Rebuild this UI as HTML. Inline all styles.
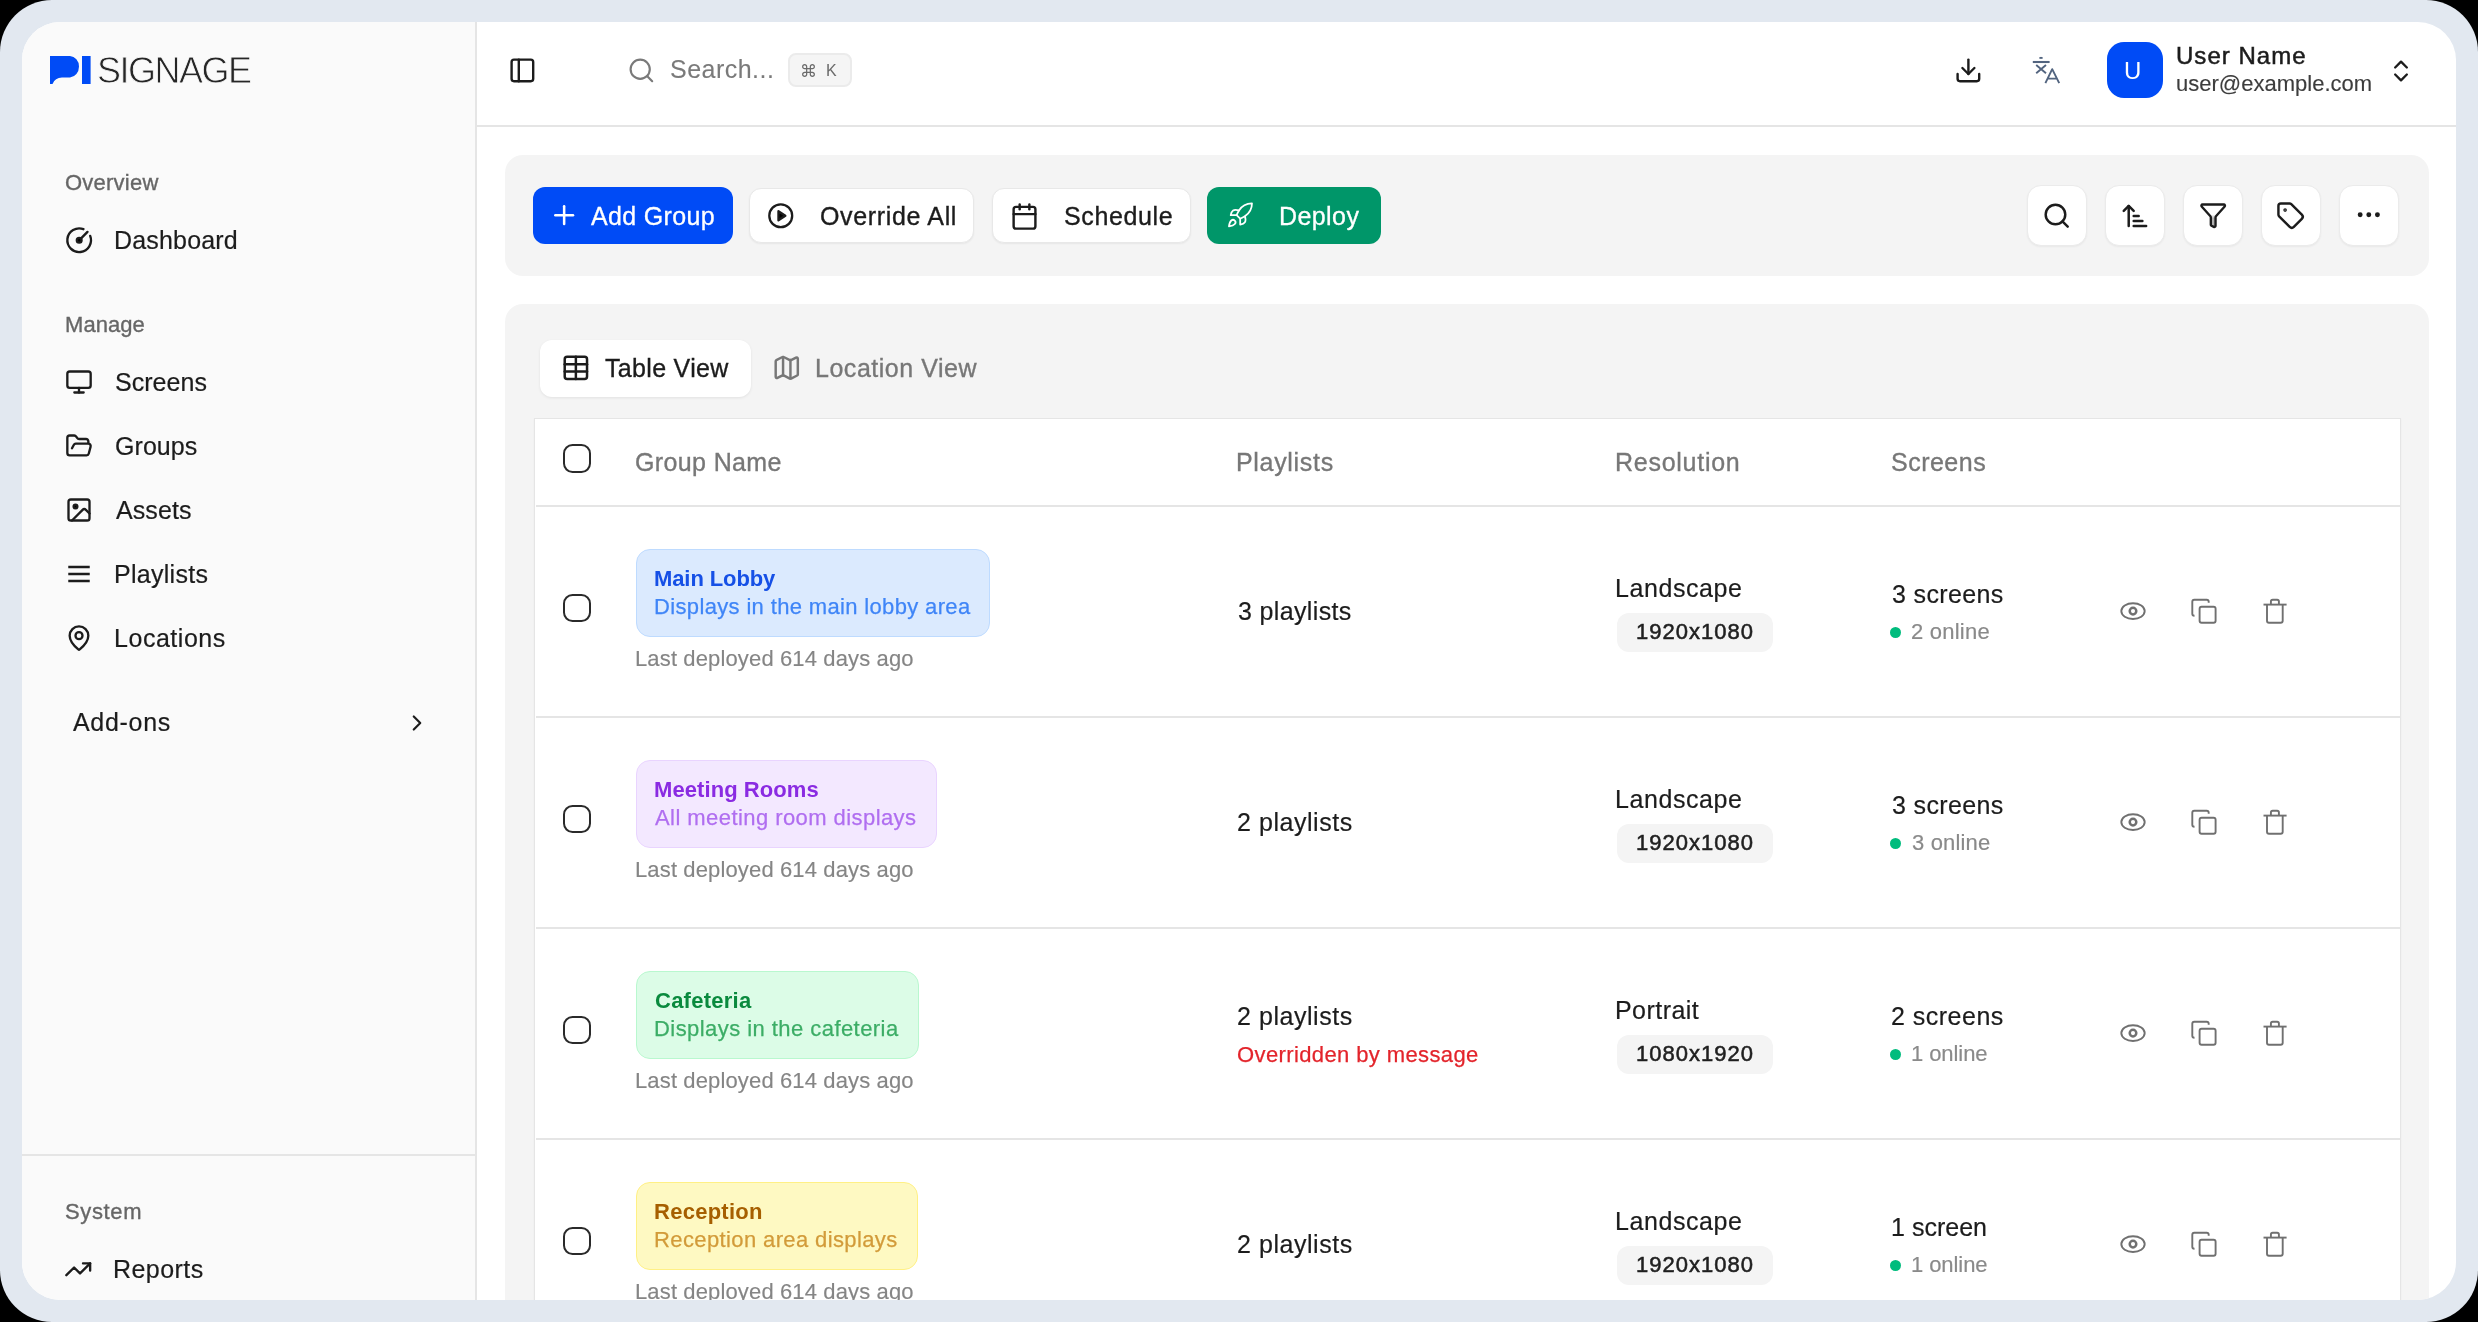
<!DOCTYPE html><html><head><meta charset="utf-8"><style>
html,body{margin:0;padding:0;width:2478px;height:1322px;overflow:hidden;background:#000}
.frame{position:absolute;left:0;top:0;width:2478px;height:1322px;background:#e2e8f0;border-radius:52px}
.clip{position:absolute;left:0;top:0;width:2478px;height:1322px;background:#fff;clip-path:inset(22px 22px 22px 22px round 38px)}
.t{position:absolute;white-space:pre;font-family:"Liberation Sans",sans-serif;will-change:transform}
.r{position:absolute}
.i{position:absolute;overflow:visible}
</style></head><body><div class="frame"></div>
<div class="clip">
<div class="r" style="left:22px;top:22px;width:453px;height:1278px;background:#fafafa"></div>
<div class="r" style="left:475px;top:22px;width:2px;height:1278px;background:#e5e5e5"></div>
<svg class="i" style="left:50px;top:56px;width:41px;height:28px" viewBox="0 0 41 28"><path d="M0 0H20A9.5 10.5 0 0 1 29 10.5 9.5 11 0 0 1 20 21.5H12Q5 21.5 2.5 28H0Z" fill="#004bf6"/><rect x="32" y="0" width="8.6" height="28" fill="#004bf6"/></svg>
<div class="t" style="left:96.90px;top:53.33px;font-size:36px;line-height:36px;color:#262626;font-weight:400;letter-spacing:-1.505px;-webkit-text-stroke:0.8px #fafafa">SIGNAGE</div>
<div class="t" style="left:65.08px;top:172.08px;font-size:22px;line-height:22px;color:#666666;font-weight:400;letter-spacing:0.236px;-webkit-text-stroke:0.35px #666666;">Overview</div>
<svg class="i" style="left:64.50px;top:226.20px;width:28.40px;height:28.40px;" viewBox="0 0 24 24" fill="none" stroke="#1c1c1c" stroke-width="2" stroke-linecap="round" stroke-linejoin="round"><path d="M15.6 2.7a10 10 0 1 0 5.7 5.7"/><circle cx="12" cy="12" r="2" fill="currentColor"/><path d="M13.4 10.6 19 5"/></svg>
<div class="t" style="left:114.00px;top:228.04px;font-size:25px;line-height:25px;color:#1c1c1c;font-weight:400;letter-spacing:0.175px;-webkit-text-stroke:0.2px #1c1c1c;">Dashboard</div>
<div class="t" style="left:65.08px;top:314.18px;font-size:22px;line-height:22px;color:#666666;font-weight:400;letter-spacing:0.056px;-webkit-text-stroke:0.35px #666666;">Manage</div>
<svg class="i" style="left:64.80px;top:368.00px;width:28.00px;height:28.00px;" viewBox="0 0 24 24" fill="none" stroke="#1c1c1c" stroke-width="2" stroke-linecap="round" stroke-linejoin="round"><rect width="20" height="14" x="2" y="3" rx="2"/><path d="M8 21h8"/><path d="M12 17v4"/></svg>
<div class="t" style="left:114.50px;top:369.84px;font-size:25px;line-height:25px;color:#1c1c1c;font-weight:400;letter-spacing:0.031px;-webkit-text-stroke:0.2px #1c1c1c;">Screens</div>
<svg class="i" style="left:64.80px;top:432.00px;width:28.00px;height:28.00px;" viewBox="0 0 24 24" fill="none" stroke="#1c1c1c" stroke-width="2" stroke-linecap="round" stroke-linejoin="round"><path d="m6 14 1.5-2.9A2 2 0 0 1 9.24 10H20a2 2 0 0 1 1.94 2.5l-1.54 6a2 2 0 0 1-1.95 1.5H4a2 2 0 0 1-2-2V5a2 2 0 0 1 2-2h3.9a2 2 0 0 1 1.69.9l.81 1.2a2 2 0 0 0 1.67.9H18a2 2 0 0 1 2 2v2"/></svg>
<div class="t" style="left:114.50px;top:433.84px;font-size:25px;line-height:25px;color:#1c1c1c;font-weight:400;letter-spacing:0.064px;-webkit-text-stroke:0.2px #1c1c1c;">Groups</div>
<svg class="i" style="left:64.80px;top:496.00px;width:28.00px;height:28.00px;" viewBox="0 0 24 24" fill="none" stroke="#1c1c1c" stroke-width="2" stroke-linecap="round" stroke-linejoin="round"><rect width="18" height="18" x="3" y="3" rx="2" ry="2"/><circle cx="9" cy="9" r="1.6" fill="currentColor"/><path d="m21 15-3.086-3.086a2 2 0 0 0-2.828 0L6 21"/></svg>
<div class="t" style="left:115.50px;top:497.84px;font-size:25px;line-height:25px;color:#1c1c1c;font-weight:400;letter-spacing:0.095px;-webkit-text-stroke:0.2px #1c1c1c;">Assets</div>
<svg class="i" style="left:64.80px;top:560.00px;width:28.00px;height:28.00px;" viewBox="0 0 24 24" fill="none" stroke="#1c1c1c" stroke-width="2" stroke-linecap="round" stroke-linejoin="round"><path d="M2.8 6h18.4M2.8 12h18.4M2.8 18h18.4" stroke-width="2.3" stroke-linecap="butt"/></svg>
<div class="t" style="left:113.50px;top:561.84px;font-size:25px;line-height:25px;color:#1c1c1c;font-weight:400;letter-spacing:0.277px;-webkit-text-stroke:0.2px #1c1c1c;">Playlists</div>
<svg class="i" style="left:64.80px;top:624.00px;width:28.00px;height:28.00px;" viewBox="0 0 24 24" fill="none" stroke="#1c1c1c" stroke-width="2" stroke-linecap="round" stroke-linejoin="round"><path d="M20 10c0 4.993-5.539 10.193-7.399 11.799a1 1 0 0 1-1.202 0C9.539 20.193 4 14.993 4 10a8 8 0 0 1 16 0"/><circle cx="12" cy="10" r="3"/></svg>
<div class="t" style="left:113.50px;top:625.84px;font-size:25px;line-height:25px;color:#1c1c1c;font-weight:400;letter-spacing:0.535px;-webkit-text-stroke:0.2px #1c1c1c;">Locations</div>
<div class="t" style="left:72.70px;top:710.24px;font-size:25px;line-height:25px;color:#1c1c1c;font-weight:400;letter-spacing:0.697px;-webkit-text-stroke:0.2px #1c1c1c;">Add-ons</div>
<svg class="i" style="left:404.00px;top:710.00px;width:26.00px;height:26.00px;" viewBox="0 0 24 24" fill="none" stroke="#1c1c1c" stroke-width="2" stroke-linecap="round" stroke-linejoin="round"><path d="m9 18 6-6-6-6"/></svg>
<div class="r" style="left:22px;top:1154px;width:453px;height:2px;background:#e5e5e5"></div>
<div class="t" style="left:64.58px;top:1200.68px;font-size:22px;line-height:22px;color:#666666;font-weight:400;letter-spacing:0.646px;-webkit-text-stroke:0.35px #666666;">System</div>
<svg class="i" style="left:64.40px;top:1255.00px;width:28.50px;height:28.50px;" viewBox="0 0 24 24" fill="none" stroke="#1c1c1c" stroke-width="2" stroke-linecap="round" stroke-linejoin="round"><path d="M22 7 13.5 15.5 8.5 10.5 2 17"/><path d="M16 7h6v6"/></svg>
<div class="t" style="left:113.10px;top:1256.84px;font-size:25px;line-height:25px;color:#1c1c1c;font-weight:400;letter-spacing:0.444px;-webkit-text-stroke:0.2px #1c1c1c;">Reports</div>
<div class="r" style="left:477px;top:125px;width:1980px;height:2px;background:#e5e5e5"></div>
<svg class="i" style="left:507.60px;top:55.60px;width:28.80px;height:28.80px;" viewBox="0 0 24 24" fill="none" stroke="#1c1c1c" stroke-width="2" stroke-linecap="round" stroke-linejoin="round"><rect width="18" height="18" x="3" y="3" rx="2"/><path d="M9 3v18"/></svg>
<svg class="i" style="left:626.60px;top:55.60px;width:28.80px;height:28.80px;" viewBox="0 0 24 24" fill="none" stroke="#7a7a7a" stroke-width="1.8" stroke-linecap="round" stroke-linejoin="round"><circle cx="11" cy="11" r="8"/><path d="m21 21-4.3-4.3"/></svg>
<div class="t" style="left:670.05px;top:57.34px;font-size:25px;line-height:25px;color:#7a7a7a;font-weight:400;letter-spacing:0.475px;-webkit-text-stroke:0.1px #7a7a7a;">Search...</div>
<div class="r" style="left:788px;top:53px;width:64px;height:34px;background:#f5f5f5;border:2px solid #ebebeb;border-radius:8px;box-sizing:border-box"></div>
<div class="t" style="left:800.00px;top:62.61px;font-size:17px;line-height:17px;color:#6b6b6b;font-weight:400;letter-spacing:0.000px;">&#8984;</div>
<div class="t" style="left:825.80px;top:63.26px;font-size:16px;line-height:16px;color:#6b6b6b;font-weight:400;letter-spacing:0.000px;">K</div>
<svg class="i" style="left:1953.60px;top:55.60px;width:28.80px;height:28.80px;" viewBox="0 0 24 24" fill="none" stroke="#1c1c1c" stroke-width="2" stroke-linecap="round" stroke-linejoin="round"><path d="M21 15v4a2 2 0 0 1-2 2H5a2 2 0 0 1-2-2v-4"/><path d="M7 10l5 5 5-5"/><path d="M12 15V3"/></svg>
<svg class="i" style="left:0;top:0;width:2478px;height:1322px" viewBox="0 0 2478 1322" fill="none" stroke="#52647f" stroke-width="1.9"><path d="M2039.4 57.9H2042.6"/><path d="M2032.8 62H2049.6" stroke-width="2.1"/><path d="M2036.2 65L2046 73.2M2046 65L2036.2 73.2"/><path d="M2045.4 83.2L2052.2 69.2L2059.2 83.2M2047.8 78.6H2056.6" stroke-linejoin="round"/></svg>
<div class="r" style="left:2106.5px;top:41.8px;width:56.5px;height:56.5px;background:#004bf6;border-radius:17px"></div>
<div class="t" style="left:2123.50px;top:58.98px;font-size:24px;line-height:24px;color:#ffffff;font-weight:400;letter-spacing:0.000px;">U</div>
<div class="t" style="left:2176.25px;top:44.18px;font-size:24px;line-height:24px;color:#1c1c1c;font-weight:400;letter-spacing:1.024px;-webkit-text-stroke:0.5px #1c1c1c;">User Name</div>
<div class="t" style="left:2176.07px;top:72.68px;font-size:22px;line-height:22px;color:#3d3d3d;font-weight:400;letter-spacing:0.014px;-webkit-text-stroke:0.15px #3d3d3d;">user@example.com</div>
<svg class="i" style="left:2387.00px;top:56.50px;width:28.00px;height:28.00px;" viewBox="0 0 24 24" fill="none" stroke="#1c1c1c" stroke-width="2" stroke-linecap="round" stroke-linejoin="round"><path d="m7 15 5 5 5-5"/><path d="m7 9 5-5 5 5"/></svg>
<div class="r" style="left:504.5px;top:155px;width:1924.5px;height:121px;background:#f4f4f4;border-radius:18px"></div>
<div class="r" style="left:533px;top:187.3px;width:200px;height:56.5px;background:#004bf6;border-radius:12px"></div>
<svg class="i" style="left:549.45px;top:200.45px;width:30.30px;height:30.30px;" viewBox="0 0 24 24" fill="none" stroke="#fff" stroke-width="2" stroke-linecap="round" stroke-linejoin="round"><path d="M5 12h14"/><path d="M12 5v14"/></svg>
<div class="t" style="left:590.95px;top:203.54px;font-size:25px;line-height:25px;color:#fff;font-weight:400;letter-spacing:0.349px;-webkit-text-stroke:0.3px #fff;">Add Group</div>
<div class="r" style="left:749.2px;top:188.3px;width:225.0px;height:54.5px;background:#fff;border:1.5px solid #e8e8e8;border-radius:12px;box-sizing:border-box;box-shadow:0 1px 2px rgba(0,0,0,0.06)"></div>
<svg class="i" style="left:767.25px;top:201.85px;width:27.49px;height:27.49px;" viewBox="0 0 24 24" fill="none" stroke="#1c1c1c" stroke-width="2" stroke-linecap="round" stroke-linejoin="round"><circle cx="12" cy="12" r="10"/><path d="M10 8l6 4-6 4z" fill="currentColor"/></svg>
<div class="t" style="left:819.97px;top:203.54px;font-size:25px;line-height:25px;color:#1c1c1c;font-weight:400;letter-spacing:0.656px;-webkit-text-stroke:0.35px #1c1c1c;">Override All</div>
<div class="r" style="left:992px;top:188.3px;width:199px;height:54.5px;background:#fff;border:1.5px solid #e8e8e8;border-radius:12px;box-sizing:border-box;box-shadow:0 1px 2px rgba(0,0,0,0.06)"></div>
<svg class="i" style="left:1009.88px;top:201.79px;width:29.04px;height:29.04px;" viewBox="0 0 24 24" fill="none" stroke="#1c1c1c" stroke-width="2" stroke-linecap="round" stroke-linejoin="round"><path d="M8 2v4"/><path d="M16 2v4"/><rect width="18" height="18" x="3" y="4" rx="2"/><path d="M3 10h18"/></svg>
<div class="t" style="left:1063.88px;top:203.54px;font-size:25px;line-height:25px;color:#1c1c1c;font-weight:400;letter-spacing:0.615px;-webkit-text-stroke:0.35px #1c1c1c;">Schedule</div>
<div class="r" style="left:1207px;top:187.3px;width:173.5px;height:56.5px;background:#009669;border-radius:12px"></div>
<svg class="i" style="left:1226.23px;top:201.23px;width:28.35px;height:28.35px;" viewBox="0 0 24 24" fill="none" stroke="#fff" stroke-width="1.5" stroke-linecap="round" stroke-linejoin="round"><path d="M4.5 16.5c-1.5 1.26-2 5-2 5s3.74-.5 5-2c.71-.84.7-2.13-.09-2.91a2.18 2.18 0 0 0-2.91-.09z"/><path d="m12 15-3-3a22 22 0 0 1 2-3.95A12.88 12.88 0 0 1 22 2c0 2.72-.78 7.5-6 11a22.35 22.35 0 0 1-4 2z"/><path d="M9 12H4s.55-3.03 2-4c1.62-1.08 5 0 5 0"/><path d="M12 15v5s3.03-.55 4-2c1.08-1.62 0-5 0-5"/></svg>
<div class="t" style="left:1278.75px;top:203.54px;font-size:25px;line-height:25px;color:#fff;font-weight:400;letter-spacing:0.416px;-webkit-text-stroke:0.3px #fff;">Deploy</div>
<div class="r" style="left:2026.6px;top:184.8px;width:60.4px;height:60.8px;background:#fff;border:1.5px solid #ebebeb;border-radius:14px;box-sizing:border-box;box-shadow:0 1px 2px rgba(0,0,0,0.05)"></div>
<svg class="i" style="left:2041.95px;top:200.85px;width:29.40px;height:29.40px;" viewBox="0 0 24 24" fill="none" stroke="#1c1c1c" stroke-width="2" stroke-linecap="round" stroke-linejoin="round"><circle cx="11" cy="11" r="8"/><path d="m21 21-4.3-4.3"/></svg>
<div class="r" style="left:2104.7px;top:184.8px;width:60.4px;height:60.8px;background:#fff;border:1.5px solid #ebebeb;border-radius:14px;box-sizing:border-box;box-shadow:0 1px 2px rgba(0,0,0,0.05)"></div>
<svg class="i" style="left:2120.01px;top:201.26px;width:29.88px;height:29.88px;" viewBox="0 0 24 24" fill="none" stroke="#1c1c1c" stroke-width="2" stroke-linecap="round" stroke-linejoin="round"><path d="m3 8 4-4 4 4"/><path d="M7 4v16"/><path d="M11 12h4"/><path d="M11 16h7"/><path d="M11 20h10"/></svg>
<div class="r" style="left:2182.7999999999997px;top:184.8px;width:60.4px;height:60.8px;background:#fff;border:1.5px solid #ebebeb;border-radius:14px;box-sizing:border-box;box-shadow:0 1px 2px rgba(0,0,0,0.05)"></div>
<svg class="i" style="left:2198.62px;top:200.94px;width:28.36px;height:28.36px;" viewBox="0 0 24 24" fill="none" stroke="#1c1c1c" stroke-width="2" stroke-linecap="round" stroke-linejoin="round"><defs><linearGradient id="fg" x1="0" y1="0" x2="0" y2="1"><stop offset="0.45" stop-color="#fff"/><stop offset="0.62" stop-color="#b0b0b0"/></linearGradient></defs><path fill="url(#fg)" d="M10 20a1 1 0 0 0 .553.895l2 1A1 1 0 0 0 14 21v-7a2 2 0 0 1 .517-1.341L21.74 4.67A1 1 0 0 0 21 3H3a1 1 0 0 0-.742 1.67l7.225 7.989A2 2 0 0 1 10 14z"/></svg>
<div class="r" style="left:2260.9px;top:184.8px;width:60.4px;height:60.8px;background:#fff;border:1.5px solid #ebebeb;border-radius:14px;box-sizing:border-box;box-shadow:0 1px 2px rgba(0,0,0,0.05)"></div>
<svg class="i" style="left:2276.09px;top:201.19px;width:29.13px;height:29.13px;" viewBox="0 0 24 24" fill="none" stroke="#1c1c1c" stroke-width="2" stroke-linecap="round" stroke-linejoin="round"><path d="M12.586 2.586A2 2 0 0 0 11.172 2H4a2 2 0 0 0-2 2v7.172a2 2 0 0 0 .586 1.414l8.704 8.704a2.426 2.426 0 0 0 3.42 0l6.58-6.58a2.426 2.426 0 0 0 0-3.42z"/><circle cx="7.5" cy="7.5" r=".5" fill="currentColor"/></svg>
<div class="r" style="left:2339.0px;top:184.8px;width:60.4px;height:60.8px;background:#fff;border:1.5px solid #ebebeb;border-radius:14px;box-sizing:border-box;box-shadow:0 1px 2px rgba(0,0,0,0.05)"></div>
<svg class="i" style="left:2354.10px;top:200.17px;width:29.60px;height:29.60px;" viewBox="0 0 24 24" fill="none" stroke="#1c1c1c" stroke-width="2" stroke-linecap="round" stroke-linejoin="round"><circle cx="12" cy="12" r="1"/><circle cx="19" cy="12" r="1"/><circle cx="5" cy="12" r="1"/></svg>
<div class="r" style="left:504.5px;top:304px;width:1924.5px;height:1100px;background:#f4f4f4;border-radius:18px"></div>
<div class="r" style="left:540px;top:340px;width:211.2px;height:57px;background:#fff;border-radius:12px;box-shadow:0 1px 3px rgba(0,0,0,0.08)"></div>
<svg class="i" style="left:560.52px;top:353.02px;width:29.76px;height:29.76px;" viewBox="0 0 24 24" fill="none" stroke="#1c1c1c" stroke-width="2" stroke-linecap="round" stroke-linejoin="round"><path d="M12 3v18"/><rect width="18" height="18" x="3" y="3" rx="2"/><path d="M3 9h18"/><path d="M3 15h18"/></svg>
<div class="t" style="left:605.17px;top:355.54px;font-size:25px;line-height:25px;color:#1c1c1c;font-weight:400;letter-spacing:0.317px;-webkit-text-stroke:0.35px #1c1c1c;">Table View</div>
<svg class="i" style="left:771.54px;top:353.04px;width:29.52px;height:29.52px;" viewBox="0 0 24 24" fill="none" stroke="#777777" stroke-width="2" stroke-linecap="round" stroke-linejoin="round"><path d="M14.106 5.553a2 2 0 0 0 1.788 0l3.659-1.83A1 1 0 0 1 21 4.619v12.764a1 1 0 0 1-.553.894l-4.553 2.277a2 2 0 0 1-1.788 0l-4.212-2.106a2 2 0 0 0-1.788 0l-3.659 1.83A1 1 0 0 1 3 19.381V6.618a1 1 0 0 1 .553-.894l4.553-2.277a2 2 0 0 1 1.788 0z"/><path d="M15 5.764v15"/><path d="M9 3.236v15"/></svg>
<div class="t" style="left:814.57px;top:355.54px;font-size:25px;line-height:25px;color:#777777;font-weight:400;letter-spacing:0.525px;-webkit-text-stroke:0.35px #777777;">Location View</div>
<div class="r" style="left:534px;top:418px;width:1867px;height:1000px;background:#fff;border:1.5px solid #e5e5e5;border-bottom:none;box-sizing:border-box;box-shadow:0 1px 2px rgba(0,0,0,0.04)"></div>
<div class="r" style="left:535.5px;top:504.5px;width:1864px;height:2px;background:#e5e5e5"></div>
<div class="r" style="left:563.1px;top:444.3px;width:28.3px;height:28.3px;border:2px solid #2a2a2a;border-radius:9.5px;box-sizing:border-box;background:#fff"></div>
<div class="t" style="left:634.77px;top:449.94px;font-size:25px;line-height:25px;color:#777777;font-weight:400;letter-spacing:0.371px;-webkit-text-stroke:0.35px #777777;">Group Name</div>
<div class="t" style="left:1236.47px;top:449.94px;font-size:25px;line-height:25px;color:#777777;font-weight:400;letter-spacing:0.683px;-webkit-text-stroke:0.35px #777777;">Playlists</div>
<div class="t" style="left:1615.38px;top:449.94px;font-size:25px;line-height:25px;color:#777777;font-weight:400;letter-spacing:0.736px;-webkit-text-stroke:0.35px #777777;">Resolution</div>
<div class="t" style="left:1890.58px;top:449.94px;font-size:25px;line-height:25px;color:#777777;font-weight:400;letter-spacing:0.490px;-webkit-text-stroke:0.35px #777777;">Screens</div>
<div class="r" style="left:563.2px;top:593.6px;width:28.3px;height:28.3px;border:2px solid #2a2a2a;border-radius:9.5px;box-sizing:border-box;background:#fff"></div>
<div class="r" style="left:635.8px;top:549.2px;width:354.6px;height:88.1px;background:#dbeafe;border:1.6px solid #bedbff;border-radius:14px;box-sizing:border-box"></div>
<div class="t" style="left:653.60px;top:567.88px;font-size:22px;line-height:22px;color:#1650e6;font-weight:700;letter-spacing:-0.098px;">Main Lobby</div>
<div class="t" style="left:653.73px;top:595.68px;font-size:22px;line-height:22px;color:#3f85f7;font-weight:400;letter-spacing:0.349px;-webkit-text-stroke:0.25px #3f85f7;">Displays in the main lobby area</div>
<div class="t" style="left:634.88px;top:647.58px;font-size:22px;line-height:22px;color:#858585;font-weight:400;letter-spacing:0.135px;-webkit-text-stroke:0.15px #858585;">Last deployed 614 days ago</div>
<div class="t" style="left:1238.40px;top:599.14px;font-size:25px;line-height:25px;color:#1c1c1c;font-weight:400;letter-spacing:0.353px;-webkit-text-stroke:0.2px #1c1c1c;">3 playlists</div>
<div class="t" style="left:1614.80px;top:575.94px;font-size:25px;line-height:25px;color:#1c1c1c;font-weight:400;letter-spacing:0.572px;-webkit-text-stroke:0.2px #1c1c1c;">Landscape</div>
<div class="r" style="left:1616.9px;top:612.9px;width:156px;height:39.5px;background:#f4f4f4;border-radius:12px"></div>
<div class="t" style="left:1635.58px;top:621.28px;font-size:22px;line-height:22px;color:#1f1f1f;font-weight:400;letter-spacing:1.000px;-webkit-text-stroke:0.55px #1f1f1f;">1920x1080</div>
<div class="t" style="left:1891.50px;top:581.84px;font-size:25px;line-height:25px;color:#1c1c1c;font-weight:400;letter-spacing:0.364px;-webkit-text-stroke:0.2px #1c1c1c;">3 screens</div>
<div class="r" style="left:1890px;top:627px;width:11.3px;height:11.3px;background:#00bc7d;border-radius:50%"></div>
<div class="t" style="left:1911.40px;top:620.68px;font-size:22px;line-height:22px;color:#8a8a8a;font-weight:400;letter-spacing:0.224px;-webkit-text-stroke:0.2px #8a8a8a;">2 online</div>
<svg class="i" style="left:0;top:0px;width:2478px;height:1322px" viewBox="0 0 2478 1322" fill="none" stroke="#707070" stroke-width="1.9">
<ellipse cx="2133" cy="611.1" rx="11.7" ry="7.9"/><circle cx="2133" cy="611.1" r="3.3" stroke-width="2.5"/>
<path d="M2194.5 615.8H2194.3Q2192.3 615.8 2192.3 613.8V601.8Q2192.3 599.8 2194.3 599.8H2206.7Q2208.7 599.8 2208.7 601.8V602.8"/><rect x="2199.6" y="606.7" width="16" height="16" rx="2"/>
<path d="M2263.5 604.6H2286.6"/><path d="M2270.9 604.6V601.6Q2270.9 599.8 2272.7 599.8H2277.1Q2278.9 599.8 2278.9 601.6V604.6"/><path d="M2267 604.6V620.7Q2267 622.7 2269 622.7H2280.7Q2282.7 622.7 2282.7 620.7V604.6"/>
</svg>
<div class="r" style="left:535.5px;top:715.5px;width:1864px;height:2px;background:#e5e5e5"></div>
<div class="r" style="left:563.2px;top:804.6px;width:28.3px;height:28.3px;border:2px solid #2a2a2a;border-radius:9.5px;box-sizing:border-box;background:#fff"></div>
<div class="r" style="left:635.8px;top:760.2px;width:301.3px;height:88.1px;background:#f3e8ff;border:1.6px solid #e9d4ff;border-radius:14px;box-sizing:border-box"></div>
<div class="t" style="left:653.60px;top:778.88px;font-size:22px;line-height:22px;color:#8a2be2;font-weight:700;letter-spacing:0.079px;">Meeting Rooms</div>
<div class="t" style="left:654.73px;top:806.68px;font-size:22px;line-height:22px;color:#b06ef0;font-weight:400;letter-spacing:0.433px;-webkit-text-stroke:0.25px #b06ef0;">All meeting room displays</div>
<div class="t" style="left:634.88px;top:858.58px;font-size:22px;line-height:22px;color:#858585;font-weight:400;letter-spacing:0.135px;-webkit-text-stroke:0.15px #858585;">Last deployed 614 days ago</div>
<div class="t" style="left:1237.40px;top:810.14px;font-size:25px;line-height:25px;color:#1c1c1c;font-weight:400;letter-spacing:0.550px;-webkit-text-stroke:0.2px #1c1c1c;">2 playlists</div>
<div class="t" style="left:1614.80px;top:786.94px;font-size:25px;line-height:25px;color:#1c1c1c;font-weight:400;letter-spacing:0.572px;-webkit-text-stroke:0.2px #1c1c1c;">Landscape</div>
<div class="r" style="left:1616.9px;top:823.9px;width:156px;height:39.5px;background:#f4f4f4;border-radius:12px"></div>
<div class="t" style="left:1635.58px;top:832.28px;font-size:22px;line-height:22px;color:#1f1f1f;font-weight:400;letter-spacing:1.000px;-webkit-text-stroke:0.55px #1f1f1f;">1920x1080</div>
<div class="t" style="left:1891.50px;top:792.84px;font-size:25px;line-height:25px;color:#1c1c1c;font-weight:400;letter-spacing:0.364px;-webkit-text-stroke:0.2px #1c1c1c;">3 screens</div>
<div class="r" style="left:1890px;top:838px;width:11.3px;height:11.3px;background:#00bc7d;border-radius:50%"></div>
<div class="t" style="left:1912.40px;top:831.68px;font-size:22px;line-height:22px;color:#8a8a8a;font-weight:400;letter-spacing:0.167px;-webkit-text-stroke:0.2px #8a8a8a;">3 online</div>
<svg class="i" style="left:0;top:211px;width:2478px;height:1322px" viewBox="0 0 2478 1322" fill="none" stroke="#707070" stroke-width="1.9">
<ellipse cx="2133" cy="611.1" rx="11.7" ry="7.9"/><circle cx="2133" cy="611.1" r="3.3" stroke-width="2.5"/>
<path d="M2194.5 615.8H2194.3Q2192.3 615.8 2192.3 613.8V601.8Q2192.3 599.8 2194.3 599.8H2206.7Q2208.7 599.8 2208.7 601.8V602.8"/><rect x="2199.6" y="606.7" width="16" height="16" rx="2"/>
<path d="M2263.5 604.6H2286.6"/><path d="M2270.9 604.6V601.6Q2270.9 599.8 2272.7 599.8H2277.1Q2278.9 599.8 2278.9 601.6V604.6"/><path d="M2267 604.6V620.7Q2267 622.7 2269 622.7H2280.7Q2282.7 622.7 2282.7 620.7V604.6"/>
</svg>
<div class="r" style="left:535.5px;top:926.5px;width:1864px;height:2px;background:#e5e5e5"></div>
<div class="r" style="left:563.2px;top:1015.6px;width:28.3px;height:28.3px;border:2px solid #2a2a2a;border-radius:9.5px;box-sizing:border-box;background:#fff"></div>
<div class="r" style="left:635.8px;top:971.2px;width:283.3px;height:88.1px;background:#dcfce7;border:1.6px solid #b9f8cf;border-radius:14px;box-sizing:border-box"></div>
<div class="t" style="left:654.60px;top:989.88px;font-size:22px;line-height:22px;color:#0a8a3e;font-weight:700;letter-spacing:0.248px;">Cafeteria</div>
<div class="t" style="left:653.73px;top:1017.68px;font-size:22px;line-height:22px;color:#3cad66;font-weight:400;letter-spacing:0.443px;-webkit-text-stroke:0.25px #3cad66;">Displays in the cafeteria</div>
<div class="t" style="left:634.88px;top:1069.58px;font-size:22px;line-height:22px;color:#858585;font-weight:400;letter-spacing:0.135px;-webkit-text-stroke:0.15px #858585;">Last deployed 614 days ago</div>
<div class="t" style="left:1237.40px;top:1003.54px;font-size:25px;line-height:25px;color:#1c1c1c;font-weight:400;letter-spacing:0.550px;-webkit-text-stroke:0.2px #1c1c1c;">2 playlists</div>
<div class="t" style="left:1237.12px;top:1043.58px;font-size:22px;line-height:22px;color:#e3242b;font-weight:400;letter-spacing:0.386px;-webkit-text-stroke:0.25px #e3242b;">Overridden by message</div>
<div class="t" style="left:1614.80px;top:997.94px;font-size:25px;line-height:25px;color:#1c1c1c;font-weight:400;letter-spacing:0.450px;-webkit-text-stroke:0.2px #1c1c1c;">Portrait</div>
<div class="r" style="left:1616.9px;top:1034.9px;width:156px;height:39.5px;background:#f4f4f4;border-radius:12px"></div>
<div class="t" style="left:1635.58px;top:1043.28px;font-size:22px;line-height:22px;color:#1f1f1f;font-weight:400;letter-spacing:1.000px;-webkit-text-stroke:0.55px #1f1f1f;">1080x1920</div>
<div class="t" style="left:1890.50px;top:1003.84px;font-size:25px;line-height:25px;color:#1c1c1c;font-weight:400;letter-spacing:0.489px;-webkit-text-stroke:0.2px #1c1c1c;">2 screens</div>
<div class="r" style="left:1890px;top:1049px;width:11.3px;height:11.3px;background:#00bc7d;border-radius:50%"></div>
<div class="t" style="left:1911.40px;top:1042.68px;font-size:22px;line-height:22px;color:#8a8a8a;font-weight:400;letter-spacing:-0.076px;-webkit-text-stroke:0.2px #8a8a8a;">1 online</div>
<svg class="i" style="left:0;top:422px;width:2478px;height:1322px" viewBox="0 0 2478 1322" fill="none" stroke="#707070" stroke-width="1.9">
<ellipse cx="2133" cy="611.1" rx="11.7" ry="7.9"/><circle cx="2133" cy="611.1" r="3.3" stroke-width="2.5"/>
<path d="M2194.5 615.8H2194.3Q2192.3 615.8 2192.3 613.8V601.8Q2192.3 599.8 2194.3 599.8H2206.7Q2208.7 599.8 2208.7 601.8V602.8"/><rect x="2199.6" y="606.7" width="16" height="16" rx="2"/>
<path d="M2263.5 604.6H2286.6"/><path d="M2270.9 604.6V601.6Q2270.9 599.8 2272.7 599.8H2277.1Q2278.9 599.8 2278.9 601.6V604.6"/><path d="M2267 604.6V620.7Q2267 622.7 2269 622.7H2280.7Q2282.7 622.7 2282.7 620.7V604.6"/>
</svg>
<div class="r" style="left:535.5px;top:1137.5px;width:1864px;height:2px;background:#e5e5e5"></div>
<div class="r" style="left:563.2px;top:1226.6px;width:28.3px;height:28.3px;border:2px solid #2a2a2a;border-radius:9.5px;box-sizing:border-box;background:#fff"></div>
<div class="r" style="left:635.8px;top:1182.2px;width:281.9px;height:88.1px;background:#fef9c2;border:1.6px solid #fff085;border-radius:14px;box-sizing:border-box"></div>
<div class="t" style="left:653.60px;top:1200.88px;font-size:22px;line-height:22px;color:#a65f00;font-weight:700;letter-spacing:0.261px;">Reception</div>
<div class="t" style="left:653.73px;top:1228.68px;font-size:22px;line-height:22px;color:#d29b3a;font-weight:400;letter-spacing:0.384px;-webkit-text-stroke:0.25px #d29b3a;">Reception area displays</div>
<div class="t" style="left:634.88px;top:1280.58px;font-size:22px;line-height:22px;color:#858585;font-weight:400;letter-spacing:0.135px;-webkit-text-stroke:0.15px #858585;">Last deployed 614 days ago</div>
<div class="t" style="left:1237.40px;top:1232.14px;font-size:25px;line-height:25px;color:#1c1c1c;font-weight:400;letter-spacing:0.550px;-webkit-text-stroke:0.2px #1c1c1c;">2 playlists</div>
<div class="t" style="left:1614.80px;top:1208.94px;font-size:25px;line-height:25px;color:#1c1c1c;font-weight:400;letter-spacing:0.572px;-webkit-text-stroke:0.2px #1c1c1c;">Landscape</div>
<div class="r" style="left:1616.9px;top:1245.9px;width:156px;height:39.5px;background:#f4f4f4;border-radius:12px"></div>
<div class="t" style="left:1635.58px;top:1254.28px;font-size:22px;line-height:22px;color:#1f1f1f;font-weight:400;letter-spacing:1.000px;-webkit-text-stroke:0.55px #1f1f1f;">1920x1080</div>
<div class="t" style="left:1890.50px;top:1214.84px;font-size:25px;line-height:25px;color:#1c1c1c;font-weight:400;letter-spacing:0.017px;-webkit-text-stroke:0.2px #1c1c1c;">1 screen</div>
<div class="r" style="left:1890px;top:1260px;width:11.3px;height:11.3px;background:#00bc7d;border-radius:50%"></div>
<div class="t" style="left:1911.40px;top:1253.68px;font-size:22px;line-height:22px;color:#8a8a8a;font-weight:400;letter-spacing:-0.076px;-webkit-text-stroke:0.2px #8a8a8a;">1 online</div>
<svg class="i" style="left:0;top:633px;width:2478px;height:1322px" viewBox="0 0 2478 1322" fill="none" stroke="#707070" stroke-width="1.9">
<ellipse cx="2133" cy="611.1" rx="11.7" ry="7.9"/><circle cx="2133" cy="611.1" r="3.3" stroke-width="2.5"/>
<path d="M2194.5 615.8H2194.3Q2192.3 615.8 2192.3 613.8V601.8Q2192.3 599.8 2194.3 599.8H2206.7Q2208.7 599.8 2208.7 601.8V602.8"/><rect x="2199.6" y="606.7" width="16" height="16" rx="2"/>
<path d="M2263.5 604.6H2286.6"/><path d="M2270.9 604.6V601.6Q2270.9 599.8 2272.7 599.8H2277.1Q2278.9 599.8 2278.9 601.6V604.6"/><path d="M2267 604.6V620.7Q2267 622.7 2269 622.7H2280.7Q2282.7 622.7 2282.7 620.7V604.6"/>
</svg>
</div></body></html>
